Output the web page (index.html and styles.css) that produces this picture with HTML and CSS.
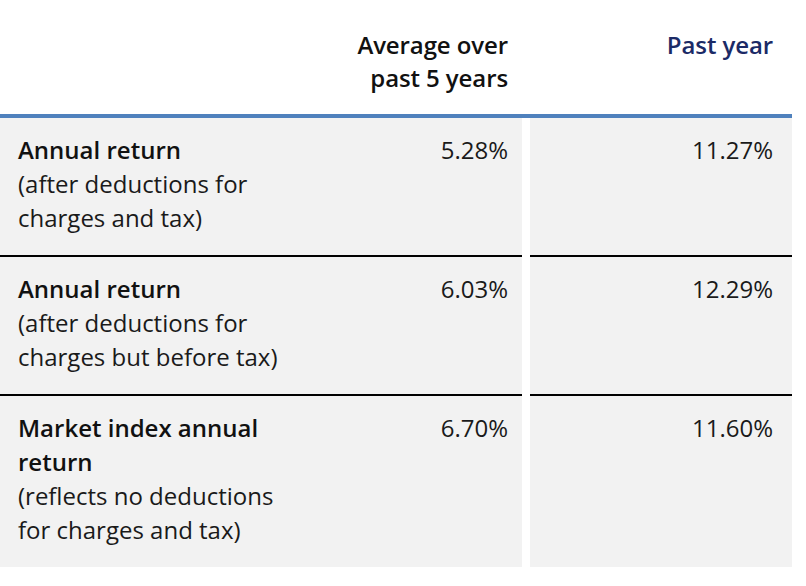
FILE: index.html
```html
<!DOCTYPE html>
<html lang="en">
<head>
<meta charset="utf-8">
<title>Returns</title>
<link rel="stylesheet" href="styles.css">
</head>
<body>
<div class="table">
  <div class="head">
    <div class="h-label"></div>
    <div class="h-avg">Average over<br>past 5 years</div>
    <div class="h-past">Past year</div>
  </div>
  <div class="row">
    <div class="label"><span class="strong">Annual return</span><br>(after deductions for<br>charges and tax)</div>
    <div class="avg">5.28%</div>
    <div class="past">11.27%</div>
  </div>
  <div class="row">
    <div class="label"><span class="strong">Annual return</span><br>(after deductions for<br>charges but before tax)</div>
    <div class="avg">6.03%</div>
    <div class="past">12.29%</div>
  </div>
  <div class="row last">
    <div class="label"><span class="strong">Market index annual<br>return</span><br>(reflects no deductions<br>for charges and tax)</div>
    <div class="avg">6.70%</div>
    <div class="past">11.60%</div>
  </div>
</div>
</body>
</html>
```
FILE: styles.css
```css
html, body {
  margin: 0;
  padding: 0;
  background: #ffffff;
}
body {
  font-family: "Open Sans", "Noto Sans", sans-serif;
  color: #1a1a1a;
}
.table {
  width: 792px;
}
.head, .row {
  display: grid;
  grid-template-columns: 330px 192px 270px;
}
.head {
  border-bottom: 4px solid #4f81bd;
  padding: 28px 0 20px;
  font-size: 24px;
  line-height: 33px;
  font-weight: 600;
  letter-spacing: -0.1px;
}
.h-avg {
  text-align: right;
  padding-right: 14px;
  color: #111111;
}
.h-past {
  text-align: right;
  padding-right: 19px;
  color: #1b2a66;
}
.row {
  font-size: 24px;
  line-height: 34px;
}
.label, .avg, .past {
  background: #f2f2f2;
  padding: 15px 0 20px;
  border-bottom: 2px solid #000000;
}
.row.last .label, .row.last .avg, .row.last .past {
  border-bottom: none;
}
.label {
  padding-left: 18px;
}
.strong {
  font-weight: 600;
  color: #111111;
}
.avg {
  text-align: right;
  padding-right: 14px;
}
.past {
  text-align: right;
  padding-right: 19px;
  margin-left: 8px;
}
```
